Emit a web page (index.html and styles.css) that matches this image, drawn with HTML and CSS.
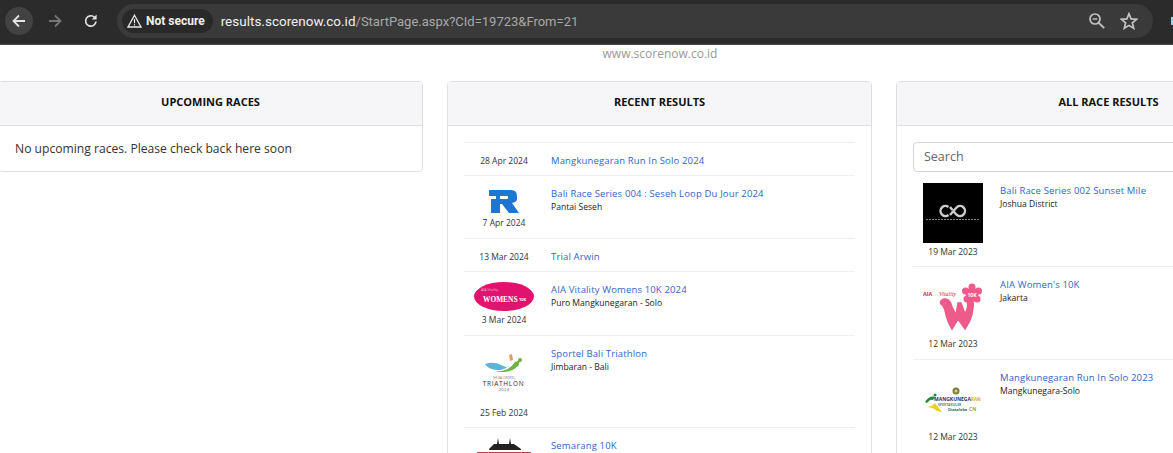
FILE: index.html
```html
<!DOCTYPE html>
<html lang="en">
<head>
  <meta charset="UTF-8" />
  <meta name="viewport" content="width=device-width, initial-scale=1" />
  <title>Race Results</title>
  <link rel="stylesheet" href="styles.css">
</head>
<body>
  <div class="toolbar">
    <span class="nav-btn nav-active">
      <svg width="16" height="16" viewBox="0 0 16 16"><path d="M14 8H3M8 2.5 2.5 8 8 13.5" fill="none" stroke="#e3e3e3" stroke-width="1.8"/></svg>
    </span>
    <span class="nav-btn">
      <svg width="16" height="16" viewBox="0 0 16 16"><path d="M2 8h11M8 2.5 13.5 8 8 13.5" fill="none" stroke="#777" stroke-width="1.8"/></svg>
    </span>
    <span class="nav-btn">
      <svg width="16" height="16" viewBox="0 0 16 16"><path d="M13 8.5A5.2 5.2 0 1 1 11.6 4.4" fill="none" stroke="#e3e3e3" stroke-width="1.7"/><path d="M13.6 1.6v4.8H8.8z" fill="#e3e3e3"/></svg>
    </span>
    <div class="omnibox">
      <span class="chip">
        <svg width="15" height="14" viewBox="0 0 15 14"><path d="M7.5 1.2 14 13H1z" fill="none" stroke="#e8e8e8" stroke-width="1.3"/><path d="M7.5 5v4.2M7.5 10.2v1.4" stroke="#e8e8e8" stroke-width="1.2"/></svg>
        Not secure
      </span>
      <span class="url"><b>results.scorenow.co.id</b>/StartPage.aspx?CId=19723&amp;From=21</span>
      <svg class="omni-icon" width="18" height="18" viewBox="0 0 18 18"><circle cx="7" cy="7" r="5" fill="none" stroke="#c4c4c4" stroke-width="1.7"/><path d="M4.6 7h4.8" stroke="#c4c4c4" stroke-width="1.4"/><path d="m10.8 10.8 5.4 5.4" stroke="#c4c4c4" stroke-width="1.9"/></svg>
      <svg class="omni-icon" width="18" height="18" viewBox="0 0 18 18"><path d="M9 1.8 11.1 6.9 16.6 7.3 12.4 10.9 13.7 16.3 9 13.4 4.3 16.3 5.6 10.9 1.4 7.3 6.9 6.9z" fill="none" stroke="#c4c4c4" stroke-width="1.7"/></svg>
    </div>
    <span class="profile-dot"></span>
  </div>

  <div class="site-link">www.scorenow.co.id</div>

  <div class="columns">
    <div class="card">
      <div class="card-header">UPCOMING RACES</div>
      <div class="card-text">No upcoming races. Please check back here soon</div>
    </div>

    <div class="card">
      <div class="card-header">RECENT RESULTS</div>
      <div class="card-body">
        <div class="race">
          <div class="race-side plain"><span>28 Apr 2024</span></div>
          <div class="race-info"><a class="race-name">Mangkunegaran Run In Solo 2024</a></div>
        </div>
        <div class="race">
          <div class="race-side">
            <svg class="logo-r" width="30" height="23" viewBox="0 0 30 23"><path fill-rule="evenodd" d="M0 0H22Q28 0 28 6V9Q28 12 23 13L30 23H20L13 14H11V23H2V9H7V6H0zM11 6V9H18Q19 9 19 8V7Q19 6 18 6z" fill="#1c76d2"/></svg>
            <span>7 Apr 2024</span>
          </div>
          <div class="race-info"><a class="race-name">Bali Race Series 004 : Seseh Loop Du Jour 2024</a><div class="race-place">Pantai Seseh</div></div>
        </div>
        <div class="race">
          <div class="race-side plain"><span>13 Mar 2024</span></div>
          <div class="race-info"><a class="race-name">Trial Arwin</a></div>
        </div>
        <div class="race">
          <div class="race-side">
            <svg class="logo-oval" width="60" height="29" viewBox="0 0 60 29">
              <ellipse cx="30" cy="14.5" rx="30" ry="14.5" fill="#e2136e"/>
              <text x="7" y="9" class="oval-small">AIA Vitality</text>
              <text x="9" y="20" class="oval-text">WOMENS</text>
              <text x="45" y="19" class="oval-ten">10K</text>
            </svg>
            <span>3 Mar 2024</span>
          </div>
          <div class="race-info"><a class="race-name">AIA Vitality Womens 10K 2024</a><div class="race-place">Puro Mangkunegaran - Solo</div></div>
        </div>
        <div class="race">
          <div class="race-side">
            <svg class="logo-square" width="60" height="60" viewBox="0 0 60 60">
              <path d="M11 18Q20 15 27 19T36 19Q30 25 22 24T11 18z" fill="#56b7d8"/>
              <path d="M19 25Q34 27 41 16L46 15Q42 29 19 25z" fill="#6cb33f"/>
              <path d="M41 17 46 13 44 21z" fill="#6cb33f"/>
              <circle cx="46" cy="14" r="2" fill="#6cb33f"/>
              <path d="M35 9 38 8 39 14 36 15z" fill="#ef9a5a"/>
              <text x="30" y="33" class="tri-small">THE BALI SPORTEL</text>
              <text x="29.500" y="40" class="tri-text">TRIATHLON</text>
              <text x="30" y="45" class="tri-year">2024</text>
            </svg>
            <span class="date-low">25 Feb 2024</span>
          </div>
          <div class="race-info"><a class="race-name">Sportel Bali Triathlon</a><div class="race-place">Jimbaran - Bali</div></div>
        </div>
        <div class="race">
          <div class="race-side">
            <svg class="logo-square" width="60" height="60" viewBox="0 0 60 60"><path d="M15 11 20 6H23L24 0 25 6H35L36 0 37 6H40L47 11V12H15z" fill="#222"/><path d="M3 14H57V16H3z" fill="#b04a4a"/></svg>
          </div>
          <div class="race-info"><a class="race-name">Semarang 10K</a></div>
        </div>
      </div>
    </div>

    <div class="card">
      <div class="card-header">ALL RACE RESULTS</div>
      <div class="card-body">
        <input class="search" type="text" placeholder="Search" />
        <div class="race top">
          <div class="race-side">
            <svg class="logo-square" width="60" height="60" viewBox="0 0 60 60">
              <rect width="60" height="60" fill="#000"/>
              <path d="M25.500 24A5 5 0 1 0 25.500 32M27 32 34 24M27 24 29.500 27M34 24A5 5 0 1 1 34 32L31 29" fill="none" stroke="#ccc" stroke-width="2.400"/>
              <path d="M3 36.500H57" stroke="#888" stroke-width="1" stroke-dasharray="2 1"/>
            </svg>
            <span>19 Mar 2023</span>
          </div>
          <div class="race-info"><a class="race-name">Bali Race Series 002 Sunset Mile</a><div class="race-place">Joshua District</div></div>
        </div>
        <div class="race">
          <div class="race-side">
            <svg class="logo-square" width="60" height="60" viewBox="0 0 60 60">
              <text x="0" y="19" class="aia-text">AIA</text>
              <text x="16" y="19" class="aia-script">Vitality</text>
              <path d="M18 27Q16 24 21 22 27 21 29 30L33 38 35 26H38L42 37Q46 30 44 22L50 21Q52 38 42 52L35 42 29 52Q24 44 22 33 20 28 18 27z" fill="#ee5a8a" stroke="#ee5a8a" stroke-width="1.500"/>
              <circle cx="49" cy="17" r="6.500" fill="#ee5a8a"/>
              <circle cx="49" cy="10" r="3.500" fill="#ee5a8a"/>
              <circle cx="55.500" cy="14" r="3.500" fill="#ee5a8a"/>
              <circle cx="54" cy="22" r="3.500" fill="#ee5a8a"/>
              <circle cx="44" cy="22" r="3.500" fill="#ee5a8a"/>
              <circle cx="42.500" cy="14" r="3.500" fill="#ee5a8a"/>
              <text x="49" y="20" class="aia-ten">10K</text>
            </svg>
            <span>12 Mar 2023</span>
          </div>
          <div class="race-info"><a class="race-name">AIA Women's 10K</a><div class="race-place">Jakarta</div></div>
        </div>
        <div class="race">
          <div class="race-side">
            <svg class="logo-square" width="60" height="60" viewBox="0 0 60 60">
              <circle cx="33" cy="21" r="3.500" fill="#7d7a40"/>
              <circle cx="33" cy="21" r="1.500" fill="#d9cf9a"/>
              <path d="M2 32Q7 25 12 27L10 30Q7 29 4 33z" fill="#1f8a3c"/>
              <circle cx="12" cy="25" r="1.500" fill="#1f8a3c"/>
              <path d="M2 37Q9 37 12 33L19 42 14 41Q10 37 2 37z" fill="#ecd21f"/>
              <text x="11" y="31" class="mk-text">MANGKUNEGA</text>
              <text x="48" y="31" class="mk-run">RAN</text>
              <text x="15" y="35.500" class="mk-sub">SPEKTAKULER</text>
              <text x="25" y="41" class="mk-sponsor">Diatalaka</text>
              <text x="46" y="41" class="mk-cn">CN</text>
            </svg>
            <span>12 Mar 2023</span>
          </div>
          <div class="race-info"><a class="race-name">Mangkunegaran Run In Solo 2023</a><div class="race-place">Mangkunegara-Solo</div></div>
        </div>
      </div>
    </div>
  </div>
</body>
</html>
```

FILE: styles.css
```css
html, body { margin: 0; padding: 0; height: 453px; overflow: hidden; background: #fff; }
body { font-family: "Open Sans", Arial, sans-serif; color: #212529; }

/* browser bar */
.toolbar { height: 45px; background: #2b2b2b; border-bottom: 1px solid #4a4a4a; display: flex; align-items: center; padding: 0 0 2px 5px; box-sizing: border-box; }
.nav-btn { width: 28px; height: 28px; margin-right: 8px; border-radius: 50%; display: flex; align-items: center; justify-content: center; flex: none; }
.nav-active { background: #424242; }
.omnibox { flex: 1; height: 34px; margin-left: 4px; background: #3a3a3a; border-radius: 17px; display: flex; align-items: center; padding: 0 15px 0 5px; }
.chip { height: 24px; padding: 0 8px 0 5px; background: #292929; border-radius: 12px; display: flex; align-items: center; gap: 4px; font: bold 12px Roboto, sans-serif; color: #eee; }
.url { flex: 1; margin-left: 8px; font: 13px Roboto, sans-serif; color: #a8a8a8; }
.url b { font-size: 13.5px; font-weight: 400; color: #f0f0f0; }
.omni-icon { margin-left: 14px; }
.profile-dot { width: 2px; height: 8px; margin-left: 18px; background: #9fd0f0; flex: none; }

.site-link { height: 36px; margin-left: 147px; text-align: center; font-size: 12px; line-height: 18px; color: #9a9a9a; }

/* cards */
.columns { display: flex; align-items: flex-start; gap: 24px; margin-left: -2px; width: 1330px; }
.card { width: 425px; flex: none; border: 1px solid #dfdfdf; border-radius: 4px; box-sizing: border-box; background: #fff; }
.card-header { height: 44px; background: #f6f6f8; border-bottom: 1px solid #dfdfdf; box-sizing: border-box; font-size: 11px; font-weight: 700; line-height: 39px; text-align: center; color: #111; }
.card-text { padding: 12px 16px; font-size: 12.13px; line-height: 21px; color: #333; }
.card-body { padding: 16px; }

.search { display: block; width: 100%; height: 30px; box-sizing: border-box; padding: 0 10px 2px; border: 1px solid #d5d5d5; border-radius: 4px; font: 12.5px "Open Sans", sans-serif; }
.search::placeholder { color: #666; }

.race { display: grid; grid-template-columns: 80px 1fr; column-gap: 7px; padding: 10px 0 8px; border-top: 1px solid #eee; }
.race.top { padding-top: 11px; border-top: 0; }
.race.top span { margin-top: 2px; margin-bottom: -1px; }
.race-side { display: flex; flex-direction: column; align-items: center; font-size: 8.5px; line-height: 14px; color: #333; }
.race-side.plain { margin: 1px 0 -1px; }
.race-info { margin: 1px 0 -1px; }
.race-name { display: block; font-size: 9.5px; line-height: 14px; letter-spacing: 0.15px; color: #2f66c8; }
.race-place { font-size: 8.6px; line-height: 13px; color: #222; }

.logo-r { margin: 4px 0 3px; }
.logo-oval { margin-bottom: 2px; }
.logo-square { display: block; }
.date-low { margin-bottom: -1px; }

/* text in logos */
.oval-small { font: 3.5px "Open Sans", sans-serif; fill: #f7b9d3; }
.oval-text { font: 700 7.4px "Liberation Serif", serif; fill: #fff; }
.oval-ten { font: 700 4px "Open Sans", sans-serif; fill: #fff; }
.tri-small { font: 2.6px "Open Sans", sans-serif; fill: #777; text-anchor: middle; }
.tri-text { font: 6.5px "Open Sans", sans-serif; letter-spacing: 0.7px; fill: #333; text-anchor: middle; }
.tri-year { font: 4px "Open Sans", sans-serif; letter-spacing: 0.4px; fill: #555; text-anchor: middle; }
.aia-text { font: 700 5.5px "Open Sans", sans-serif; fill: #d8263c; }
.aia-script { font: italic 6px "Liberation Serif", serif; fill: #d8263c; }
.aia-ten { font: 700 5px "Open Sans", sans-serif; fill: #fff; text-anchor: middle; }
.mk-text { font: 700 5px "Open Sans", sans-serif; fill: #2d2d66; }
.mk-run { font: 700 4.5px "Open Sans", sans-serif; fill: #e0a81c; }
.mk-sub { font: 700 3.4px "Open Sans", sans-serif; fill: #4d8a80; }
.mk-sponsor { font: 700 4px "Open Sans", sans-serif; fill: #2f6a6a; }
.mk-cn { font: 700 5px "Open Sans", sans-serif; fill: #9aa055; }
```
